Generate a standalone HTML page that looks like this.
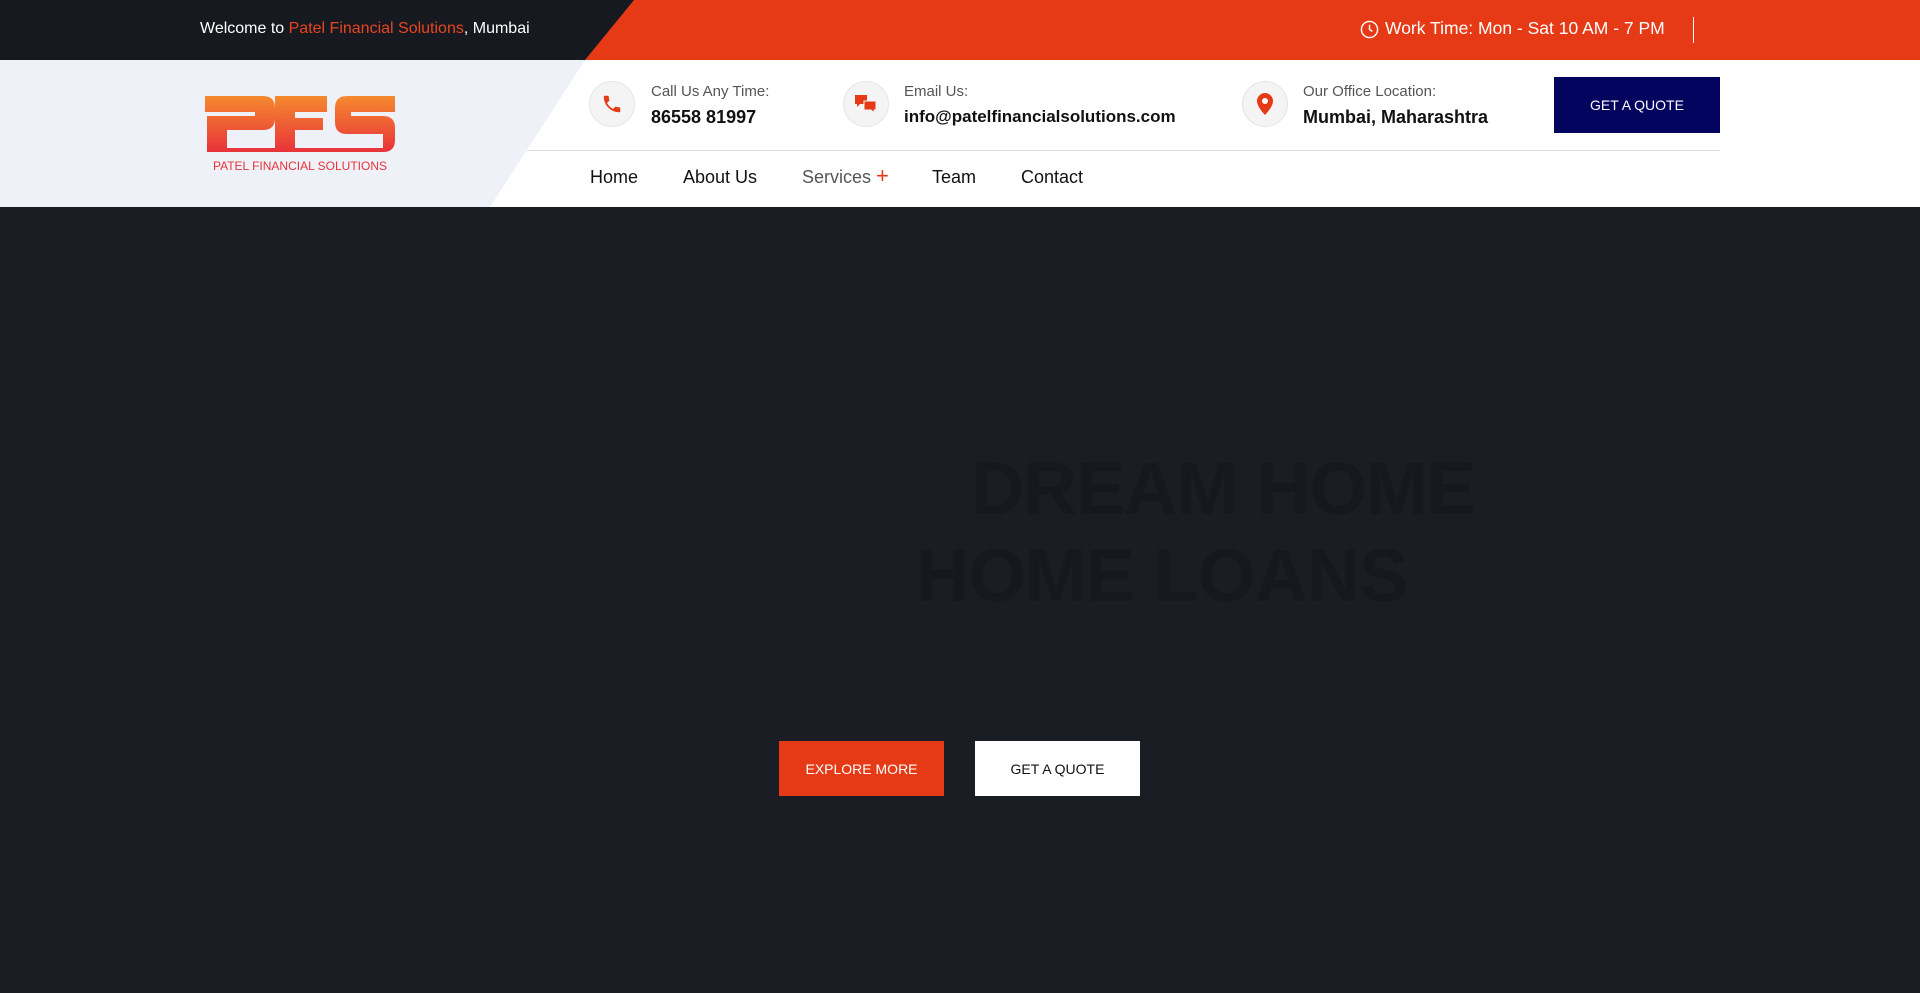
<!DOCTYPE html>
<html><head><meta charset="utf-8"><style>
*{margin:0;padding:0;box-sizing:border-box}
body{width:1920px;height:993px;overflow:hidden;background:#1b1d24;font-family:"Liberation Sans",sans-serif;position:relative}
.abs{position:absolute}
.top{left:0;top:0;width:1920px;height:60px;background:#e63a16}
.topdark{left:0;top:0;width:1920px;height:60px;background:#161920;clip-path:polygon(0 0,634px 0,585px 60px,0 60px)}
.hdr{left:0;top:60px;width:1920px;height:147px;background:#fff}
.hdrl{left:0;top:60px;width:1920px;height:147px;background:#eef1f8;clip-path:polygon(0 0,585px 0,490px 147px,0 147px)}
.ic{width:46px;height:46px;border-radius:50%;background:#f4f4f4;border:1px solid #e6e6e6;display:flex;align-items:center;justify-content:center}
.lbl{font-size:15px;color:#555}
.val{font-size:18px;font-weight:bold;color:#111}
.nav{font-size:18px;color:#111;top:167px}
.btn{display:flex;align-items:center;justify-content:center;font-size:14px}
</style></head><body>
<div class="abs top"></div><div class="abs topdark"></div>
<div class="abs" style="left:200px;top:20px;font-size:16px;color:#fff">Welcome to <span style="color:#e8451f">Patel Financial Solutions</span>, Mumbai</div>
<svg class="abs" style="left:1360px;top:20px" width="19" height="19" viewBox="0 0 20 20"><circle cx="10" cy="10" r="8.5" fill="none" stroke="#fff" stroke-width="1.5"/><path d="M10 5v5l3 2" fill="none" stroke="#fff" stroke-width="1.5"/></svg>
<div class="abs" style="left:1385px;top:18px;font-size:17.5px;color:#fff">Work Time: Mon - Sat 10 AM - 7 PM</div>
<div class="abs" style="left:1693px;top:17px;width:1px;height:26px;background:#fff"></div>
<div class="abs hdr"></div><div class="abs hdrl"></div>
<svg class="abs" style="left:203px;top:94px" width="194" height="78" viewBox="0 0 194 78">
<defs><linearGradient id="g" x1="0" y1="0" x2="0" y2="1"><stop offset="0" stop-color="#f58a2e"/><stop offset="1" stop-color="#e8323a"/></linearGradient></defs>
<path d="M2 2h58q12 0 12 12v10q0 12-12 12H24v22H4V22h48V18H2z" fill="url(#g)"/>
<path d="M72 2h52v16H92v6h28v12H92v22H72z" fill="url(#g)"/>
<path d="M132 2h60v16h-44v4h32q12 0 12 12v12q0 12-12 12H4v-4h176v-14h-36q-12 0-12-12V14q0-12 12-12z" fill="url(#g)"/>
<text x="97" y="76" text-anchor="middle" font-size="12" fill="#e8323a" font-family="Liberation Sans">PATEL FINANCIAL SOLUTIONS</text>
</svg>
<div class="abs ic" style="left:589px;top:81px"><svg width="22" height="22" viewBox="0 0 24 24"><path d="M6.6 10.8a15 15 0 006.6 6.6l2.2-2.2a1 1 0 011-.25 11 11 0 003.6.6 1 1 0 011 1V20a1 1 0 01-1 1A17 17 0 013 4a1 1 0 011-1h3.5a1 1 0 011 1c0 1.3.2 2.5.6 3.6a1 1 0 01-.25 1z" fill="#e63a16"/></svg></div>
<div class="abs lbl" style="left:651px;top:83px">Call Us Any Time:</div>
<div class="abs val" style="left:651px;top:107px">86558 81997</div>
<div class="abs ic" style="left:843px;top:81px"><svg width="24" height="22" viewBox="0 0 24 22"><path d="M1 2h12v9H6l-3 3v-3H1z" fill="#e63a16"/><path d="M10 8h12v9h-2v3l-3-3h-7z" fill="#e63a16" stroke="#f4f4f4" stroke-width="1"/></svg></div>
<div class="abs lbl" style="left:904px;top:83px">Email Us:</div>
<div class="abs val" style="left:904px;top:107px;font-size:17px">info@patelfinancialsolutions.com</div>
<div class="abs ic" style="left:1242px;top:81px"><svg width="18" height="24" viewBox="0 0 18 24"><path d="M9 1a8 8 0 018 8c0 6-8 14-8 14S1 15 1 9a8 8 0 018-8z" fill="#e63a16"/><circle cx="9" cy="9" r="3" fill="#fff"/></svg></div>
<div class="abs lbl" style="left:1303px;top:83px">Our Office Location:</div>
<div class="abs val" style="left:1303px;top:107px">Mumbai, Maharashtra</div>
<div class="abs btn" style="left:1554px;top:77px;width:166px;height:56px;background:#03045e;color:#fff">GET A QUOTE</div>
<div class="abs" style="left:527px;top:150px;width:1193px;height:1px;background:#ddd"></div>
<div class="abs nav" style="left:590px">Home</div>
<div class="abs nav" style="left:683px">About Us</div>
<div class="abs nav" style="left:802px;color:#555">Services <span style="color:#e63a16;font-size:22px;line-height:18px">+</span></div>
<div class="abs nav" style="left:932px">Team</div>
<div class="abs nav" style="left:1021px">Contact</div>
<div class="abs" style="left:971px;top:446px;font-size:74px;font-weight:bold;color:#17181f;letter-spacing:-1px">DREAM HOME</div>
<div class="abs" style="left:916px;top:533px;font-size:74px;font-weight:bold;color:#17181f;letter-spacing:-1px">HOME LOANS</div>
<div class="abs btn" style="left:779px;top:741px;width:165px;height:55px;background:#e63a16;color:#fff">EXPLORE MORE</div>
<div class="abs btn" style="left:975px;top:741px;width:165px;height:55px;background:#fff;color:#111">GET A QUOTE</div>
</body></html>
